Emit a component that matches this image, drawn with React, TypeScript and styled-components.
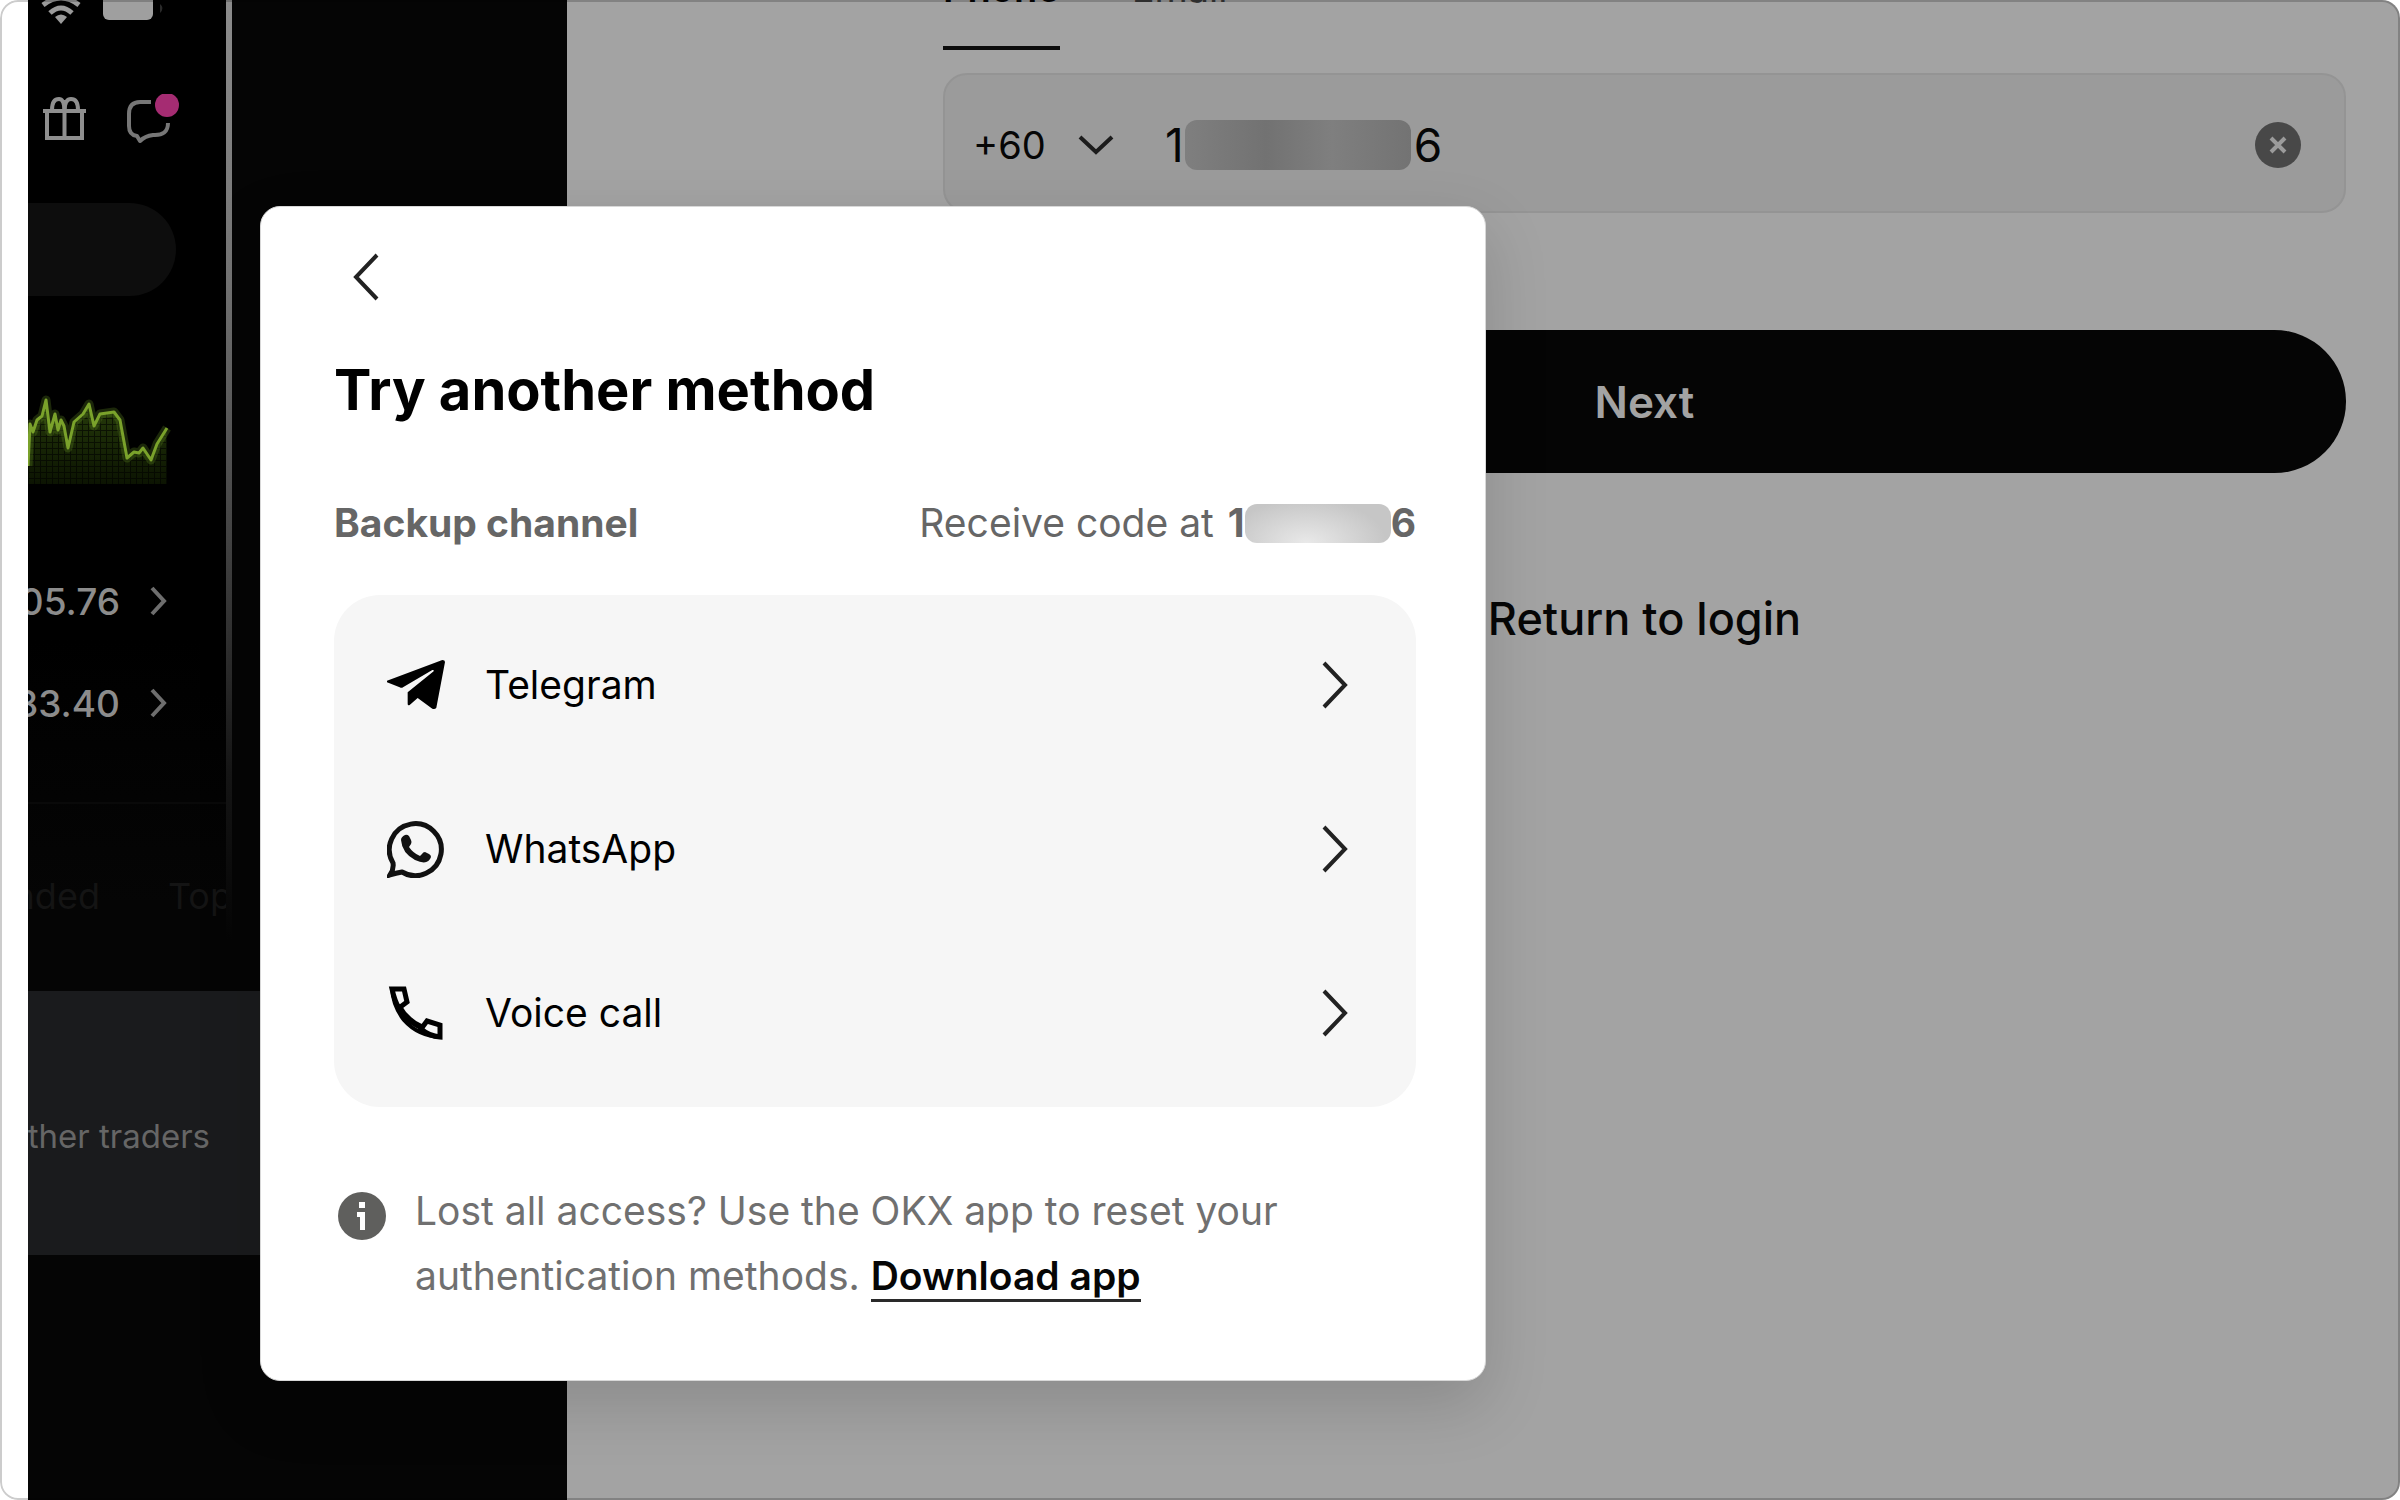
import React from "react";
import styled, { createGlobalStyle } from "styled-components";

const GlobalStyle = createGlobalStyle`
  *, *::before, *::after { box-sizing: border-box; }
  body { margin: 0; background: #fff; font-family: Inter, "Liberation Sans", sans-serif; }
  button, input, select { font: inherit; color: inherit; border: 0; background: none; padding: 0; margin: 0; }
  button { cursor: pointer; }
  svg { display: block; flex: none; }
`;

const Page = styled.div`
  position: relative;
  display: grid;
  grid-template-columns: 539px 1fr;
  min-height: 100vh;
  padding-left: 28px;
  background: #fff;
  border-radius: 18px;
  overflow: hidden;

  &::after {
    content: "";
    position: absolute;
    inset: 0;
    border: 2px solid rgba(0, 0, 0, 0.2);
    border-radius: 18px;
    pointer-events: none;
  }
`;

const Promo = styled.aside`
  background: #050505;
  overflow: hidden;
`;

const Phone = styled.div`
  display: grid;
  grid-template-columns: 1fr 6px;
  width: 204px;
  height: 940px;
`;

const Screen = styled.div`
  display: flex;
  flex-direction: column;
  min-width: 0;
  overflow: hidden;
  background: linear-gradient(#000 68%, #050505 96%);
  color: #8c8c8c;
`;

const PhoneEdge = styled.div`
  background: linear-gradient(#8c8c8c, #747474 30%, #3c3c3c 62%, #161616 82%, #050505);
`;

const StatusBar = styled.div`
  display: flex;
  gap: 20px;
  height: 24px;
  padding-left: 13px;
`;

const PhoneActions = styled.div`
  display: flex;
  gap: 34px;
  height: 52px;
  margin-top: 70px;
  padding-left: 14px;
`;

const SearchPill = styled.div`
  height: 93px;
  margin: 57px 50px 0 0;
  background: #0d0d0d;
  border-radius: 0 47px 47px 0;
`;

const ChartSlot = styled.div`
  height: 150px;
  margin: 84px 0 20px;
`;

const PriceRow = styled.div`
  display: flex;
  align-items: center;
  justify-content: flex-end;
  gap: 30px;
  height: 102px;
  padding-right: 58px;
  font-size: 37px;
  font-weight: 500;
`;

const PhoneTabs = styled.div`
  display: flex;
  justify-content: flex-end;
  gap: 68px;
  margin-top: 48px;
  margin-right: -6px;
  padding-top: 68px;
  border-top: 2px solid #090909;
  font-size: 36px;
  line-height: 48px;
  color: #141414;
`;

const TradersBand = styled.div`
  display: flex;
  align-items: center;
  height: 264px;
  margin-top: 51px;
  padding-top: 26px;
  background: #1a1b1d;
`;

const TradersText = styled.p`
  display: flex;
  justify-content: flex-end;
  width: 182px;
  margin: 0;
  font-size: 33px;
  line-height: 48px;
  white-space: nowrap;
  color: #666;
`;

const Main = styled.main`
  display: flex;
  flex-direction: column;
  padding: 0 54px 0 376px;
  background: #a3a3a3;
  color: #060606;
  overflow: hidden;
`;

const Tabs = styled.div`
  display: flex;
  gap: 72px;
  height: 86px;
  margin-top: -36px;
`;

const Tab = styled.button<{ $active?: boolean }>`
  padding-bottom: 34px;
  border-bottom: 4px solid ${(p) => (p.$active ? "#0c0c0c" : "transparent")};
  font-size: 38px;
  font-weight: ${(p) => (p.$active ? 600 : 400)};
  line-height: 48px;
  color: ${(p) => (p.$active ? "#060606" : "#3a3a3a")};
`;

const Field = styled.div`
  display: flex;
  align-items: center;
  height: 140px;
  margin-top: 23px;
  padding: 4px 43px 0 28px;
  background: #9b9b9b;
  border: 2px solid #949494;
  border-radius: 24px;
`;

const CodeLabel = styled.label`
  display: flex;
  align-items: center;
  gap: 32px;
`;

const CodeSelect = styled.select`
  width: 73px;
  appearance: none;
  font-size: 38px;
  line-height: 48px;
  outline: 0;
`;

const NumberBox = styled.div`
  position: relative;
  flex: 1;
  margin-left: 51px;
`;

const NumberInput = styled.input`
  width: 100%;
  font-size: 46px;
  line-height: 60px;
  outline: 0;
`;

const NumberMask = styled.span`
  position: absolute;
  left: 20px;
  top: 5px;
  width: 226px;
  height: 50px;
  border-radius: 12px;
  background: linear-gradient(90deg, #7f7f7f, #727272 36%, #7f7f7f 65%, #737373);
`;

const NextButton = styled.button`
  height: 143px;
  margin-top: 117px;
  border-radius: 72px;
  background: #050505;
  color: #a3a3a3;
  font-size: 44px;
  font-weight: 600;
`;

const ReturnLink = styled.a`
  align-self: center;
  margin-top: 116px;
  font-size: 45px;
  font-weight: 500;
  line-height: 60px;
  color: inherit;
  text-decoration: none;
`;

const Overlay = styled.div`
  position: absolute;
  inset: 0;
  padding: 206px 40px 0 260px;
`;

const Dialog = styled.section`
  display: flex;
  flex-direction: column;
  width: 1226px;
  max-width: 100%;
  padding: 40px 69px 72px 73px;
  background: #fff;
  border: 1px solid #d8d8d8;
  border-radius: 20px;
  box-shadow: 0 24px 64px rgba(0, 0, 0, 0.15);
  color: #000;
`;

const BackButton = styled.button`
  display: grid;
  place-items: center;
  width: 64px;
  height: 60px;
`;

const Title = styled.h1`
  margin: 47px 0 0;
  font-size: 56px;
  font-weight: 700;
  line-height: 72px;
`;

const ChannelRow = styled.div`
  display: flex;
  justify-content: space-between;
  margin-top: 73px;
  font-size: 39px;
  line-height: 48px;
  color: #666;
`;

const ChannelTitle = styled.h2`
  margin: 0;
  font-size: inherit;
  font-weight: 700;
`;

const CodeTarget = styled.div`
  display: flex;
  align-items: center;
`;

const TargetNumber = styled.strong`
  display: flex;
  align-items: center;
  margin-left: 14px;
  font-weight: 700;
`;

const TargetMask = styled.span`
  width: 146px;
  height: 39px;
  border-radius: 12px;
  background: radial-gradient(ellipse 80px 44px at 42% 100%, #e9e9e9, #c6c6c6);
`;

const MethodList = styled.ul`
  margin: 48px 0 0;
  padding: 8px 0 12px;
  list-style: none;
  background: #f6f6f6;
  border-radius: 46px;
`;

const MethodButton = styled.button`
  display: flex;
  align-items: center;
  gap: 40px;
  width: 100%;
  height: 164px;
  padding: 0 66px 0 53px;
  font-size: 39px;
  line-height: 48px;
  text-align: left;
`;

const MethodName = styled.span`
  flex: 1;
`;

const Note = styled.div`
  display: flex;
  gap: 28px;
  margin-top: 71px;
  padding-left: 3px;
`;

const NoteIcon = styled.span`
  padding-top: 13px;
`;

const NoteText = styled.p`
  margin: 0;
  max-width: 900px;
  font-size: 39px;
  line-height: 65px;
  color: #707070;
`;

const DownloadLink = styled.a`
  font-weight: 600;
  color: #060606;
  text-decoration: none;
  border-bottom: 3px solid #2a2a2a;
`;

function ChevronRight() {
  return (
    <svg width="30" height="50" viewBox="0 0 30 50" fill="none" stroke="#222" strokeWidth="4" aria-hidden="true">
      <path d="M4 3 L25 25 L4 47" />
    </svg>
  );
}

function SmallChevron() {
  return (
    <svg width="18" height="30" viewBox="0 0 18 30" fill="none" stroke="#6e6e6e" strokeWidth="4" aria-hidden="true">
      <path d="M2 2 L14 15 L2 28" />
    </svg>
  );
}

function TelegramIcon() {
  return (
    <svg width="58" height="50" viewBox="0 0 174 150" aria-hidden="true">
      <path
        d="M0 67 L0 62 L166 0 Q174 0 174 6 L148 143 Q144 149 136 146 L92 114 L68 135 Q62 138 62 131 L62 97 L140 34 Q142 29 136 30 L48 82 Q44 85 38 82 Z"
        fill="#000"
      />
    </svg>
  );
}

function WhatsAppIcon() {
  return (
    <svg width="58" height="58" viewBox="0 0 58 58" aria-hidden="true">
      <path
        d="M3 55 Q7 49 6 43 A26 26 0 1 1 15 52 Q9 53 3 55 Z"
        fill="none"
        stroke="#111"
        strokeWidth="5"
      />
      <path
        d="M14 20 Q15 33 28 40 Q41 46 44 37 Q44 35 42 34 L38 32 Q36 32 35 34 L33 36 Q26 33 22 27 L24 24 Q25 22 24 20 L22 16 Q20 14 18 15 Q14 17 14 20 Z"
        fill="#111"
      />
    </svg>
  );
}

function VoiceIcon() {
  return (
    <svg width="58" height="58" viewBox="0 0 58 58" fill="none" stroke="#000" strokeWidth="5" aria-hidden="true">
      <path d="M5 5 H17 L20 18 L12 24 Q8 18 5 5 Z" />
      <path d="M12 23 Q19 36 34 43" strokeWidth="6" />
      <path d="M34 45 L40 37 L53 41 V53 Q42 52 34 45 Z" />
      <path d="M5 4 Q6 22 17 36 Q31 52 54 53" strokeWidth="4" />
    </svg>
  );
}

function WifiIcon() {
  return (
    <svg width="42" height="24" viewBox="0 0 42 24" fill="none" stroke="#9a9a9a" strokeWidth="5" aria-hidden="true">
      <path d="M2 5 Q20 -9 38 5" />
      <path d="M9 13 Q20 3 31 13" />
      <path d="M14 17 Q20 12 26 17 L20 24 Z" fill="#9a9a9a" stroke="none" />
    </svg>
  );
}

function BatteryIcon() {
  return (
    <svg width="62" height="26" viewBox="0 0 62 26" aria-hidden="true">
      <rect x="0" y="-6" width="50" height="26" rx="6" fill="#9f9f9f" />
      <path d="M57 4 Q62 8 57 13 Z" fill="#2a2a2a" />
    </svg>
  );
}

function GiftIcon() {
  return (
    <svg width="46" height="52" viewBox="0 0 46 52" fill="none" stroke="#8f8f8f" strokeWidth="4" aria-hidden="true">
      <path d="M1 17 H44 M5 17 V44 H40 V17 M22.500 6 V44" />
      <path d="M10 16 Q10 5 17 5 Q22 5 22.500 16 Q23 5 29 5 Q36 5 36 16" />
    </svg>
  );
}

function ChatIcon() {
  return (
    <svg width="60" height="52" viewBox="0 0 60 52" fill="none" aria-hidden="true">
      <path
        d="M29 8 H18 Q7 8 7 20 V32 Q7 41 15 42 L18 47 Q23 42 31 41 Q46 42 46 29"
        stroke="#777"
        strokeWidth="4"
        strokeLinejoin="round"
      />
      <circle cx="45" cy="11" r="12" fill="#a52c72" />
    </svg>
  );
}

const CHART_LINE =
  "M0 66 L2 24 L5 32 L9 20 L14 16 L18 0 L22 32 L27 14 L30 30 L33 20 L36 26 L40 48 L46 22 L55 14 L61 4 L66 26 L72 14 L86 12 L92 20 L99 58 L106 52 L111 53 L115 48 L123 60 L129 44 L139 28";

function PriceChart() {
  return (
    <svg width="150" height="110" viewBox="0 -20 150 110" aria-hidden="true">
      <defs>
        <linearGradient id="glow" x1="0" y1="0" x2="0" y2="1">
          <stop offset="0" stopColor="#3c5c10" stopOpacity="0.7" />
          <stop offset="1" stopColor="#182804" stopOpacity="0.5" />
        </linearGradient>
        <pattern id="mesh" width="6" height="6" patternUnits="userSpaceOnUse">
          <path d="M0 0 H6 M0 0 V6" stroke="#000" strokeOpacity="0.6" strokeWidth="2" />
        </pattern>
      </defs>
      <path d={`${CHART_LINE} V84 H0 Z`} fill="url(#glow)" />
      <path d={`${CHART_LINE} V84 H0 Z`} fill="url(#mesh)" />
      <path d={CHART_LINE} fill="none" stroke="#5c8420" strokeOpacity="0.3" strokeWidth="9" strokeLinejoin="round" />
      <path d={CHART_LINE} fill="none" stroke="#7aa22b" strokeWidth="3" strokeLinejoin="round" />
    </svg>
  );
}

const prices = ["05.76", "83.40"];

const methods = [
  { name: "Telegram", Icon: TelegramIcon },
  { name: "WhatsApp", Icon: WhatsAppIcon },
  { name: "Voice call", Icon: VoiceIcon },
];

export default function App() {
  return (
    <>
      <GlobalStyle />
      <Page>
        <Promo>
          <Phone>
            <Screen>
              <StatusBar>
                <WifiIcon />
                <BatteryIcon />
              </StatusBar>
              <PhoneActions>
                <GiftIcon />
                <ChatIcon />
              </PhoneActions>
              <SearchPill />
              <ChartSlot>
                <PriceChart />
              </ChartSlot>
              {prices.map((price) => (
                <PriceRow key={price}>
                  <span>{price}</span>
                  <SmallChevron />
                </PriceRow>
              ))}
              <PhoneTabs>
                <span>nded</span>
                <span>Top</span>
              </PhoneTabs>
            </Screen>
            <PhoneEdge />
          </Phone>
          <TradersBand>
            <TradersText>ther traders</TradersText>
          </TradersBand>
        </Promo>

        <Main>
          <Tabs role="tablist">
            <Tab role="tab" aria-selected="true" $active>
              Phone
            </Tab>
            <Tab role="tab" aria-selected="false">
              Email
            </Tab>
          </Tabs>
          <Field>
            <CodeLabel>
              <CodeSelect aria-label="Country code" defaultValue="+60">
                <option value="+60">+60</option>
              </CodeSelect>
              <svg width="36" height="22" viewBox="0 0 36 22" fill="none" stroke="#1c1c1c" strokeWidth="4" aria-hidden="true">
                <path d="M2 3 L18 18 L34 3" />
              </svg>
            </CodeLabel>
            <NumberBox>
              <NumberInput type="tel" aria-label="Phone number" defaultValue={"1\u2003\u2003\u2003\u2003\u20036"} />
              <NumberMask />
            </NumberBox>
            <button aria-label="Clear">
              <svg width="46" height="48" viewBox="0 0 46 48" aria-hidden="true">
                <circle cx="23" cy="24" r="23" fill="#484848" />
                <path d="M16 17 L30 31 M30 17 L16 31" stroke="#9b9b9b" strokeWidth="4" />
              </svg>
            </button>
          </Field>
          <NextButton>Next</NextButton>
          <ReturnLink href="#login">Return to login</ReturnLink>
        </Main>

        <Overlay>
          <Dialog role="dialog" aria-labelledby="dialog-title">
            <BackButton aria-label="Back">
              <svg width="30" height="50" viewBox="0 0 30 50" fill="none" stroke="#222" strokeWidth="4" aria-hidden="true">
                <path d="M26 3 L5 25 L26 47" />
              </svg>
            </BackButton>
            <Title id="dialog-title">Try another method</Title>
            <ChannelRow>
              <ChannelTitle>Backup channel</ChannelTitle>
              <CodeTarget>
                Receive code at
                <TargetNumber>
                  1<TargetMask />6
                </TargetNumber>
              </CodeTarget>
            </ChannelRow>
            <MethodList>
              {methods.map(({ name, Icon }) => (
                <li key={name}>
                  <MethodButton>
                    <Icon />
                    <MethodName>{name}</MethodName>
                    <ChevronRight />
                  </MethodButton>
                </li>
              ))}
            </MethodList>
            <Note>
              <NoteIcon>
                <svg width="50" height="50" viewBox="0 0 50 50" aria-hidden="true">
                  <circle cx="25" cy="25" r="24" fill="#5f5f5d" />
                  <rect x="22" y="11" width="6" height="6" fill="#fff" />
                  <path d="M20 21 H28 V39 H23 V26 H20 Z" fill="#fff" />
                </svg>
              </NoteIcon>
              <NoteText>
                Lost all access? Use the OKX app to reset your authentication methods.{" "}
                <DownloadLink href="#download">Download app</DownloadLink>
              </NoteText>
            </Note>
          </Dialog>
        </Overlay>
      </Page>
    </>
  );
}
